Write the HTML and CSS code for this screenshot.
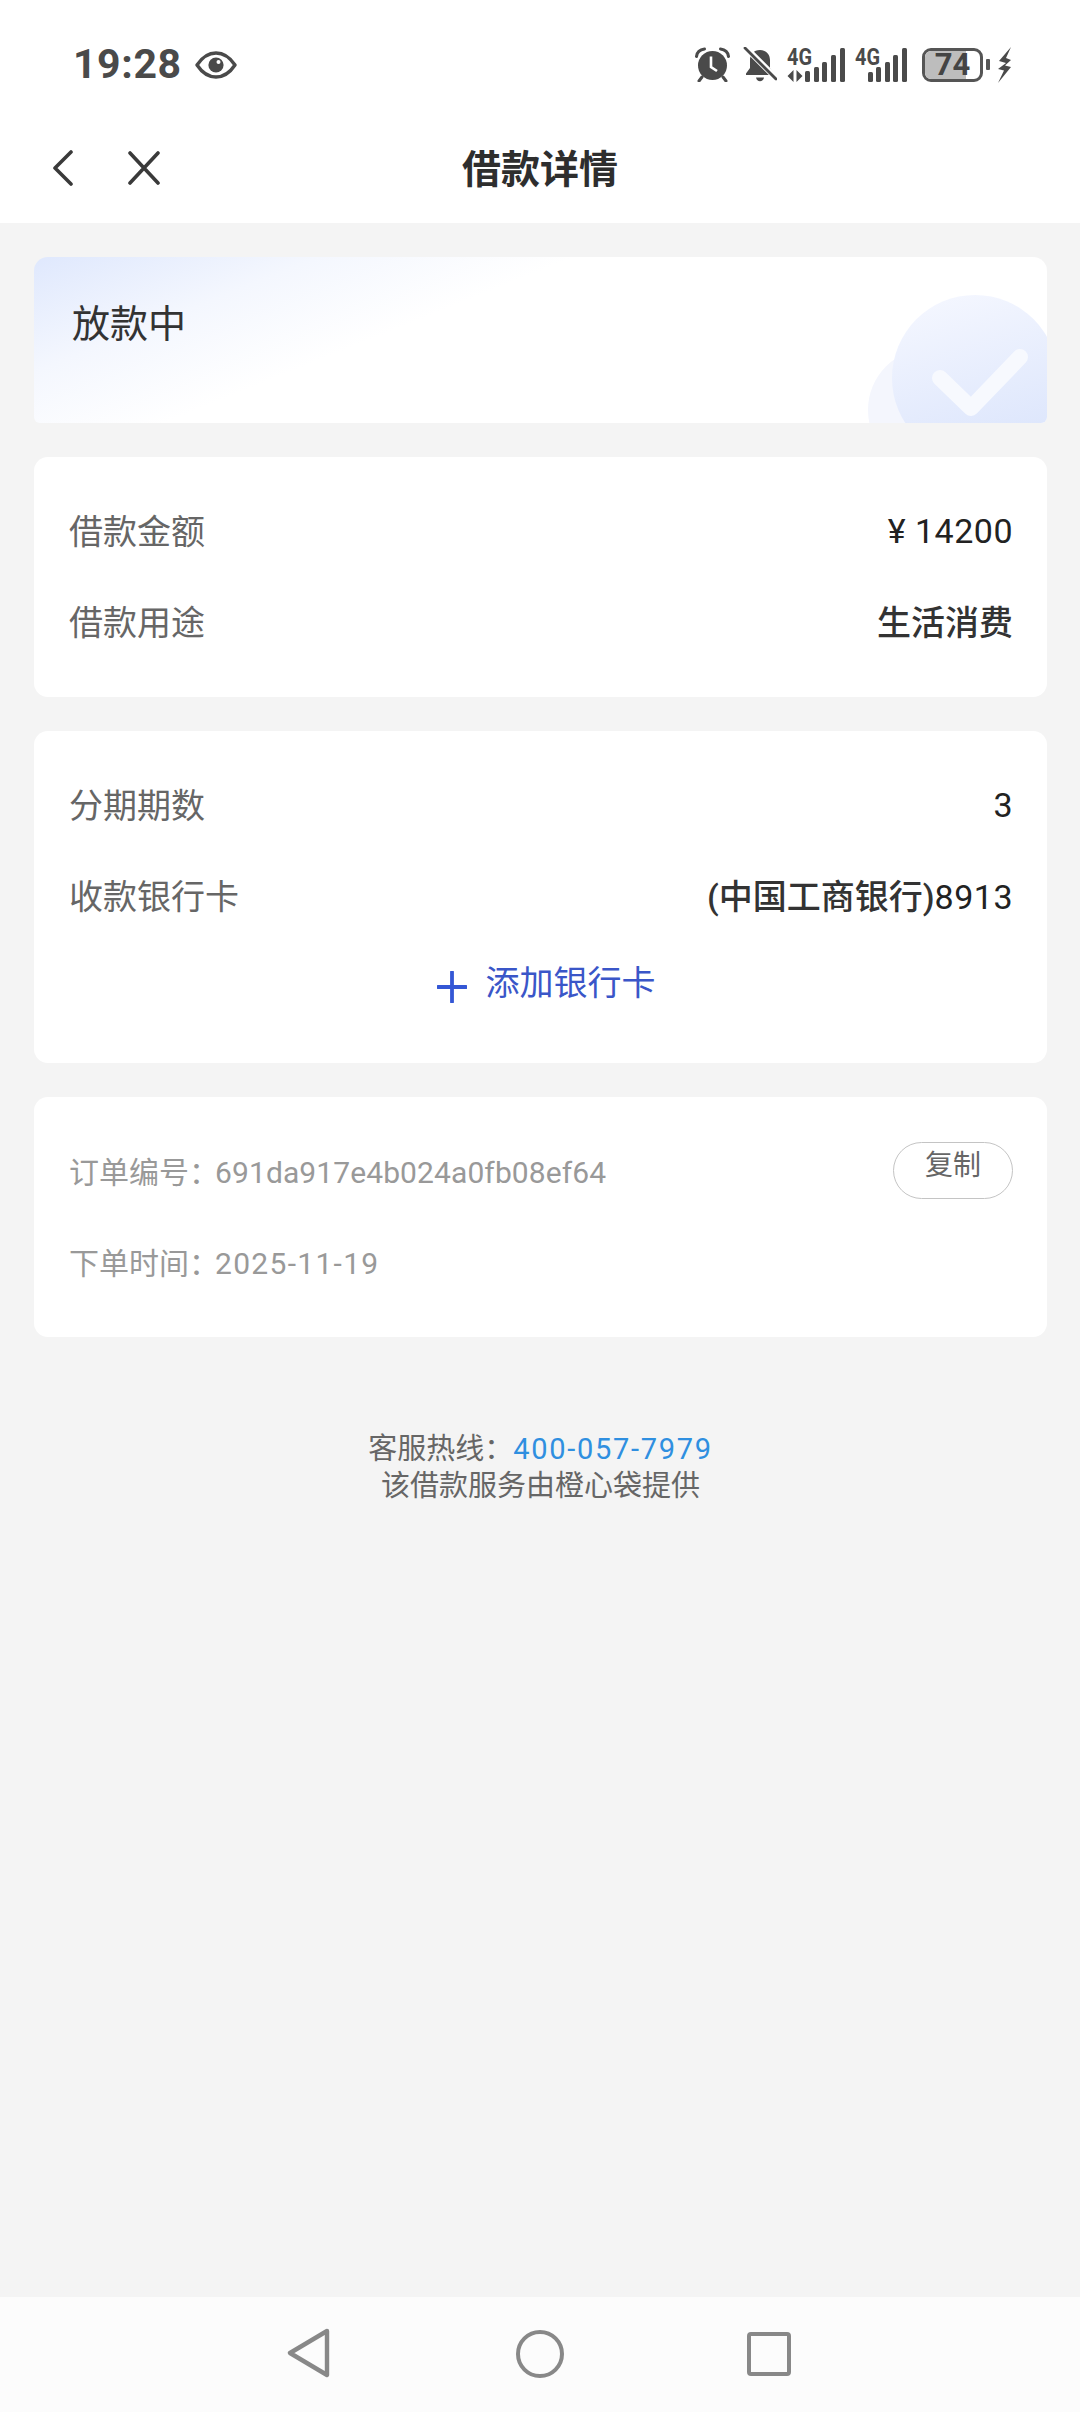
FILE: index.html
```html
<!DOCTYPE html>
<html lang="zh-CN">
<head>
    <meta charset="UTF-8">
    <meta name="viewport" content="width=device-width, initial-scale=1.0">
    <title>借款详情</title>
    <link rel="stylesheet" href="styles.css">
</head>
<body>
    <header class="top">
        <!-- status bar -->
        <div class="status">
            <div class="status-left">
                <span class="time">19:28</span>
                <svg class="eye" width="42" height="28" viewBox="0 0 42 28">
                    <path d="M2 14C8 5 14 2 21 2s13 3 19 12c-6 9-12 12-19 12S8 23 2 14z" fill="none" stroke="#4a4a4a" stroke-width="3.4" stroke-linejoin="round"/>
                    <circle cx="21" cy="14" r="7.6" fill="#4a4a4a"/>
                    <circle cx="23.5" cy="11" r="2" fill="#fff"/>
                </svg>
            </div>
            <div class="status-right">
                <svg width="35" height="35" viewBox="0 0 35 35">
                    <circle cx="17.5" cy="18.5" r="14.5" fill="#4a4a4a"/>
                    <path d="M1.5 9.5C2 5 5 2.5 9.5 2M33.5 9.5C33 5 30 2.5 25.5 2" fill="none" stroke="#4a4a4a" stroke-width="3" stroke-linecap="round"/>
                    <path d="M7 30l-3 4M28 30l3 4" stroke="#4a4a4a" stroke-width="3" stroke-linecap="round"/>
                    <path d="M16 9.5v10.5l6 4" fill="none" stroke="#fff" stroke-width="2.6"/>
                </svg>
                <svg class="gap-bell" width="34" height="36" viewBox="0 0 34 36">
                    <path d="M17 3c6.500 0 10 4.500 10 10v8l4 5.500v1.500H3v-1.500L7 21v-8C7 7.500 10.500 3 17 3z" fill="#4a4a4a"/>
                    <path d="M13 30.500h8c-.5 2.500-2 3.800-4 3.800s-3.500-1.300-4-3.800z" fill="#4a4a4a"/>
                    <path d="M2 0l31 31" stroke="#fff" stroke-width="6"/>
                    <path d="M2 1l31 31" stroke="#4a4a4a" stroke-width="2.800" stroke-linecap="round"/>
                </svg>
                <svg class="sim gap-sim" width="59" height="36" viewBox="0 0 59 36">
                    <text x="0" y="18" class="net" textLength="25" lengthAdjust="spacingAndGlyphs">4G</text>
                    <path d="M6.500 23l-6 6 6 6zM9.500 23l6 6-6 6z" fill="#4a4a4a"/>
                    <rect x="18" y="24" width="5" height="11" rx="1.500" fill="#4a4a4a"/>
                    <rect x="27" y="20" width="5" height="15" rx="1.500" fill="#4a4a4a"/>
                    <rect x="35" y="15" width="5" height="20" rx="1.500" fill="#4a4a4a"/>
                    <rect x="44" y="8" width="5" height="27" rx="1.500" fill="#4a4a4a"/>
                    <rect x="53" y="1" width="5" height="34" rx="1.500" fill="#4a4a4a"/>
                </svg>
                <svg class="sim gap-sim2" width="53" height="36" viewBox="0 0 53 36">
                    <text x="0" y="18" class="net" textLength="25" lengthAdjust="spacingAndGlyphs">4G</text>
                    <rect x="13" y="25" width="5" height="10" rx="1.500" fill="#4a4a4a"/>
                    <rect x="21" y="20" width="5" height="15" rx="1.500" fill="#4a4a4a"/>
                    <rect x="30" y="15" width="5" height="20" rx="1.500" fill="#4a4a4a"/>
                    <rect x="38" y="8" width="5" height="27" rx="1.500" fill="#4a4a4a"/>
                    <rect x="47" y="1" width="5" height="34" rx="1.500" fill="#4a4a4a"/>
                </svg>
                <div class="battery">
                    <div class="battery-body">
                        <div class="battery-fill"></div>
                        <span class="battery-num">74</span>
                    </div>
                    <div class="battery-nub"></div>
                </div>
                <svg class="gap-bolt" width="15" height="36" viewBox="0 0 15 36">
                    <path d="M14 0L2 14l7 2-8 6 6 1.500L1 36l13-16-6-1.500 6-5.500-5-2z" fill="#4a4a4a"/>
                </svg>
            </div>
        </div>
        <!-- title bar -->
        <div class="titlebar">
            <div class="titlebar-btns">
                <svg width="20" height="36" viewBox="0 0 20 36">
                    <path d="M18 2L2 18l16 16" fill="none" stroke="#3a3a3a" stroke-width="3.600" stroke-linecap="round" stroke-linejoin="round"/>
                </svg>
                <svg width="32" height="34" viewBox="0 0 32 34">
                    <path d="M2 2l28 30M30 2L2 32" fill="none" stroke="#3a3a3a" stroke-width="3.600" stroke-linecap="round"/>
                </svg>
            </div>
            <h1 class="title">借款详情</h1>
        </div>
    </header>

    <main class="content">
        <section class="card card-state">
            <div class="state-text">放款中</div>
            <svg class="state-deco" width="200" height="140" viewBox="0 0 200 140">
                <defs>
                    <linearGradient id="decoFill" x1="0" y1="0" x2="0.3" y2="1">
                        <stop offset="0" stop-color="#f6f8ff"/>
                        <stop offset="1" stop-color="#dde6fc"/>
                    </linearGradient>
                </defs>
                <circle cx="83" cy="127" r="62" fill="#f4f6fd"/>
                <circle cx="128" cy="95" r="83" fill="url(#decoFill)"/>
                <path d="M93 95l31 30 49-51" fill="none" stroke="#f7f9fe" stroke-width="16" stroke-linecap="round" stroke-linejoin="round"/>
            </svg>
        </section>

        <section class="card">
            <div class="row"><span class="label">借款金额</span><span class="value value-num"><span class="num">¥ 14200</span></span></div>
            <div class="row"><span class="label">借款用途</span><span class="value">生活消费</span></div>
        </section>

        <section class="card">
            <div class="row"><span class="label">分期期数</span><span class="value value-num"><span class="num">3</span></span></div>
            <div class="row"><span class="label">收款银行卡</span><span class="value">(中国工商银行)<span class="num">8913</span></span></div>
            <div class="add-bank">
                <svg class="add-icon" width="30" height="32" viewBox="0 0 30 32">
                    <path d="M15 1v30M1 16h28" fill="none" stroke="#3457d5" stroke-width="3.800" stroke-linecap="round"/>
                </svg>
                <span class="add-text">添加银行卡</span>
            </div>
        </section>

        <section class="card">
            <div class="row">
                <span class="order-text"><span class="order-label">订单编号：</span><span class="order-no">691da917e4b024a0fb08ef64</span></span>
                <span class="copy-btn">复制</span>
            </div>
            <div class="row">
                <span class="order-text"><span class="order-label">下单时间：</span><span class="order-date">2025-11-19</span></span>
            </div>
        </section>

        <footer class="service">
            <div>客服热线：<span class="phone">400-057-7979</span></div>
            <div>该借款服务由橙心袋提供</div>
        </footer>
    </main>

    <!-- system nav -->
    <nav class="sysnav">
        <svg width="44" height="50" viewBox="0 0 44 50">
            <path d="M40 3L3 25l37 22z" fill="none" stroke="#888" stroke-width="4.400" stroke-linejoin="round"/>
        </svg>
        <svg class="nav-home" width="48" height="48" viewBox="0 0 48 48">
            <circle cx="24" cy="24" r="22" fill="none" stroke="#888" stroke-width="4"/>
        </svg>
        <svg class="nav-recent" width="44" height="44" viewBox="0 0 44 44">
            <rect x="2" y="2" width="40" height="40" rx="2" fill="none" stroke="#888" stroke-width="4"/>
        </svg>
    </nav>
</body>
</html>
```
FILE: styles.css
```css
* {
    box-sizing: border-box;
}

body {
    margin: 0;
    width: 1080px;
    height: 2412px;
    display: flex;
    flex-direction: column;
    overflow: hidden;
    background-color: #f4f4f4;
    font-family: Roboto, "Noto Sans CJK SC", sans-serif;
    color: #222;
}

.top {
    height: 223px;
    background-color: #fff;
    display: flex;
    flex-direction: column;
}

/* status bar */
.status {
    height: 125px;
    padding: 4px 68px 0 73px;
    display: flex;
    justify-content: space-between;
    align-items: center;
}

.status-left,
.status-right {
    display: flex;
    align-items: center;
}

.time {
    font-size: 41px;
    font-weight: 700;
    letter-spacing: 0.6px;
    color: #4a4a4a;
    line-height: 1;
}

.eye {
    margin-left: 13px;
}

.gap-bell {
    margin-left: 13px;
}

.sim {
    overflow: visible;
}

.gap-sim {
    margin-left: 10px;
}

.gap-sim2 {
    margin-left: 9px;
}

.gap-bolt {
    margin-left: 7px;
}

.net {
    font-family: Roboto, sans-serif;
    font-size: 24px;
    font-weight: 700;
    fill: #4a4a4a;
}

.battery {
    margin-left: 14px;
    display: flex;
    align-items: center;
    gap: 3px;
}

.battery-body {
    position: relative;
    width: 61px;
    height: 34px;
    border: 3px solid #555;
    border-radius: 9px;
    overflow: hidden;
    display: flex;
    align-items: center;
    justify-content: center;
}

.battery-fill {
    position: absolute;
    left: 0;
    top: 0;
    bottom: 0;
    width: 74%;
    background-color: #bdbdbd;
}

.battery-num {
    position: relative;
    font-size: 31px;
    font-weight: 700;
    color: #444;
    line-height: 1;
}

.battery-nub {
    width: 4px;
    height: 11px;
    border-radius: 1px;
    background-color: #555;
}

/* title bar */
.titlebar {
    position: relative;
    height: 88px;
    padding-bottom: 7px;
    display: flex;
    align-items: center;
    justify-content: center;
}

.titlebar-btns {
    position: absolute;
    left: 53px;
    top: 25px;
    display: flex;
    align-items: center;
    gap: 55px;
}

.title {
    margin: 0;
    font-size: 39px;
    font-weight: 700;
    color: #2e2e2e;
}

/* cards */
.content {
    flex: 1;
    padding: 34px 33px 0 34px;
    display: flex;
    flex-direction: column;
    gap: 34px;
}

.card {
    position: relative;
    background-color: #fff;
    border-radius: 14px;
    padding: 27px 34px 31px 35px;
}

.card-state {
    height: 166px;
    padding: 41px 38px 0;
    overflow: hidden;
    border-radius: 14px 14px 6px 6px;
    background: linear-gradient(158deg, #dfe8fd 0%, #f4f7fe 20%, #fff 38%);
}

.state-text {
    font-size: 38px;
    line-height: 52px;
    color: #333;
}

.state-deco {
    position: absolute;
    right: 0;
    bottom: 0;
}

.row {
    height: 91px;
    display: flex;
    justify-content: space-between;
    align-items: center;
}

.label {
    font-size: 34px;
    color: #666;
}

.value {
    font-size: 34px;
    font-weight: 500;
    color: #333;
}

.value-num {
    margin-top: 3px;
}

.num {
    font-weight: 400;
    letter-spacing: 0.5px;
    color: #222;
}

.add-bank {
    height: 92px;
    padding: 18px 0 0 10px;
    display: flex;
    justify-content: center;
    align-items: flex-start;
    gap: 19px;
}

.add-icon {
    margin-top: 13px;
}

.add-text {
    font-size: 34px;
    line-height: 50px;
    color: #3a56c8;
}

.order-text {
    font-size: 30px;
    color: #999;
}

.order-label {
    margin-right: -4px;
}

.order-no {
    letter-spacing: 0.1px;
}

.order-date {
    letter-spacing: 1.3px;
}

.copy-btn {
    width: 120px;
    height: 57px;
    margin-top: 2px;
    border: 1px solid #c4c4c4;
    border-radius: 29px;
    font-size: 28px;
    line-height: 46px;
    text-align: center;
    color: #666;
}

.service {
    margin-top: 60px;
    text-align: center;
    font-size: 29px;
    line-height: 37px;
    color: #666;
}

.phone {
    letter-spacing: 1.7px;
    color: #2f8fe0;
}

/* system nav */
.sysnav {
    height: 115px;
    padding: 31px 0 0 287px;
    background-color: #fcfcfc;
    display: flex;
    align-items: flex-start;
    gap: 185px;
}

.nav-home {
    margin-top: 2px;
}

.nav-recent {
    margin-top: 4px;
    margin-left: -2px;
}
```
